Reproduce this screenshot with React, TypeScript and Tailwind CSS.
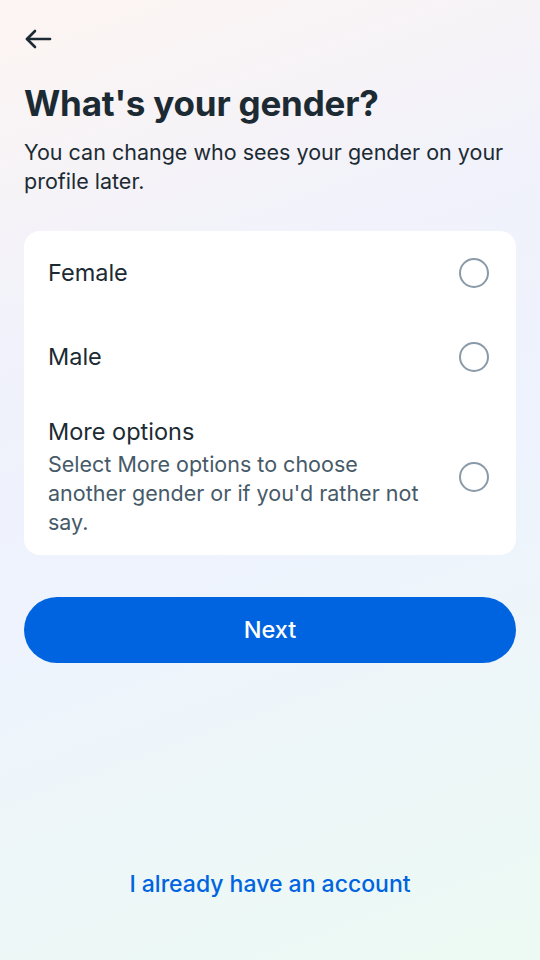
import { useState } from 'react'

const options = [
  { id: 'female', label: 'Female' },
  { id: 'male', label: 'Male' },
  {
    id: 'more',
    label: 'More options',
    hint: "Select More options to choose another gender or if you'd rather not say.",
  },
]

function Radio({ checked }: { checked: boolean }) {
  return (
    <span
      className={`flex h-[30px] w-[30px] shrink-0 items-center justify-center rounded-full border-[2.5px] ${
        checked ? 'border-[#0064e0]' : 'border-[#8a9aa8]'
      }`}
    >
      {checked && <span className="h-[14px] w-[14px] rounded-full bg-[#0064e0]" />}
    </span>
  )
}

export default function App() {
  const [selected, setSelected] = useState<string | null>(null)

  return (
    <div
      className="min-h-screen w-full bg-[linear-gradient(160deg,#fdf5f2_0%,#f1f2fb_30%,#eef3fd_55%,#ecfaf3_100%)] px-6 pt-6 pb-10 text-[#1c2b33]"
      style={{ fontFamily: 'Inter, "Noto Sans", sans-serif' }}
    >
      {/* Back */}
      <button className="flex h-[30px] w-[30px] items-center justify-start">
        <svg width="28" height="20" viewBox="0 0 28 20" fill="none" stroke="#1c2b33" strokeWidth="2.6" strokeLinecap="round" strokeLinejoin="round">
          <path d="M26 10H3" />
          <path d="M11 2L3 10L11 18" />
        </svg>
      </button>

      {/* Heading */}
      <h1 className="mt-[27px] text-[35px] font-bold leading-[44px] tracking-[-0.2px]">What's your gender?</h1>
      <p className="mt-[13px] text-[21.5px] leading-[29px] text-[#1c2b33]">
        You can change who sees your gender on your profile later.
      </p>

      {/* Options card */}
      <div className="mt-[35px] rounded-2xl bg-white">
        {options.map((o) => (
          <button
            key={o.id}
            onClick={() => setSelected(o.id)}
            className={`flex w-full items-center justify-between gap-4 pl-6 pr-[27px] text-left ${
              o.hint ? 'py-[18px]' : 'h-[84px]'
            }`}
          >
            <span className="flex max-w-[390px] flex-col">
              <span className="text-[23.5px] leading-[30px]">{o.label}</span>
              {o.hint && (
                <span className="mt-[3px] text-[21.5px] leading-[29px] text-[#465a69]">{o.hint}</span>
              )}
            </span>
            <Radio checked={selected === o.id} />
          </button>
        ))}
      </div>

      {/* Next */}
      <button className="mt-[42px] flex h-[66px] w-full items-center justify-center rounded-full bg-[#0064e0] text-[23.5px] font-medium text-white">
        Next
      </button>

      <div className="mt-[207px] flex justify-center">
        <button className="text-[23px] font-medium leading-[29px] text-[#0064e0]">I already have an account</button>
      </div>
    </div>
  )
}
